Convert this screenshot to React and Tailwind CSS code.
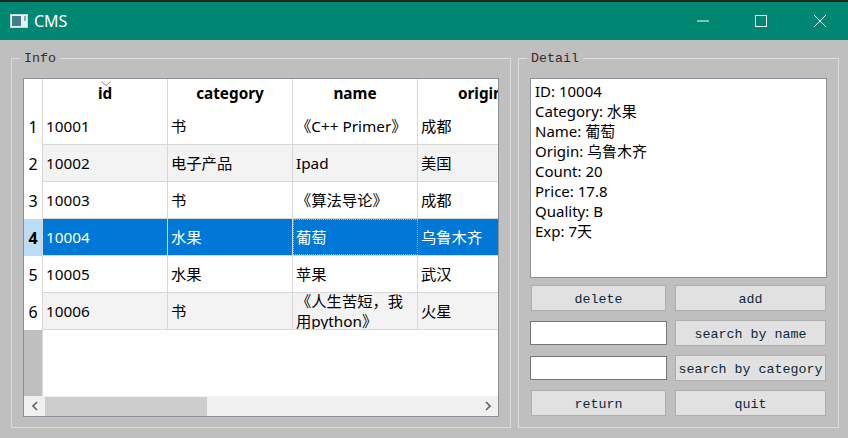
import React from 'react';

const sans = 'font-["Noto_Sans","Noto_Sans_CJK_SC",sans-serif]';
const mono = 'font-["Liberation_Mono","Noto_Sans_CJK_SC",monospace]';

const columns = [
    { label: 'id', key: 'id' },
    { label: 'category', key: 'category' },
    { label: 'name', key: 'name' },
];

const rows = [
    { id: '10001', category: '书', name: '《C++ Primer》', origin: '成都' },
    { id: '10002', category: '电子产品', name: 'Ipad', origin: '美国' },
    { id: '10003', category: '书', name: '《算法导论》', origin: '成都' },
    { id: '10004', category: '水果', name: '葡萄', origin: '乌鲁木齐' },
    { id: '10005', category: '水果', name: '苹果', origin: '武汉' },
    { id: '10006', category: '书', name: '《人生苦短，我用python》', origin: '火星' },
];

const detail = ['ID: 10004', 'Category: 水果', 'Name: 葡萄', 'Origin: 乌鲁木齐', 'Count: 20', 'Price: 17.8', 'Quality: B', 'Exp: 7天'];

const GroupBox = ({ title, className, children }) => (
    <div className={`relative border border-[#dcdcdc] ${className}`}>
        <span className={`absolute -top-[8px] left-[8px] bg-[#bfbfbf] px-[4px] text-[13.33px] leading-[16px] text-[#3a2a28] ${mono}`}>{title}</span>
        {children}
    </div>
);

const Button = ({ label, className = '' }) => (
    <button className={`h-[26px] border border-[#adadad] bg-[#e1e1e1] pt-[4px] text-[13.33px] leading-[16px] text-[#0a2a3a] ${mono} ${className}`}>{label}</button>
);

const Input = () => <input className="h-[24px] w-[137px] border border-[#767676] bg-white" />;

const Table = () => (
    <div className={`flex h-[339px] w-[476px] flex-col border border-[#8a8f98] bg-white text-[15.3px] text-black ${sans}`}>
        <div className="flex min-h-0 flex-1 overflow-hidden">
            {/* row header */}
            <div className="flex w-[18px] shrink-0 flex-col bg-[#bfbfbf]">
                <div className="h-[29px] shrink-0 bg-white" />
                {rows.map((row, i) => (
                    <div
                        key={row.id}
                        className={`flex h-[37px] shrink-0 items-center justify-center text-[16px] ${i === 3 ? 'bg-[#bcdcf4] font-bold' : 'bg-white'}`}
                    >
                        {i + 1}
                    </div>
                ))}
            </div>

            <div className="flex min-w-0 flex-1 flex-col border-l border-[#d8d8d8]">
                <div className="relative flex h-[29px] shrink-0 font-bold">
                    <svg className="absolute left-[58px] top-[2px]" width="10" height="5" viewBox="0 0 10 5" fill="none" stroke="#8a8a8a">
                        <path d="M0.5 0.5 L5 4.5 L9.5 0.5" />
                    </svg>
                    {columns.map((col) => (
                        <div key={col.key} className="flex w-[125px] shrink-0 justify-center border-r border-[#d8d8d8] leading-[28px]">{col.label}</div>
                    ))}
                    <div className="w-[125px] shrink-0 text-center leading-[28px]">origin</div>
                </div>

                {rows.map((row, i) => {
                    const selected = i === 3;
                    const rowClass = selected ? 'bg-[#0078d7] text-white' : i % 2 === 1 ? 'bg-[#f3f3f3]' : 'bg-white';
                    return (
                        <div key={row.id} className={`flex h-[37px] shrink-0 border-b border-[#d8d8d8] ${rowClass}`}>
                            {columns.map((col) => {
                                const current = selected && col.key === 'name';
                                return (
                                    <div
                                        key={col.key}
                                        className={`flex w-[125px] shrink-0 items-center overflow-hidden pr-[3px] leading-[20px] ${current ? 'border border-dotted border-[#f0a040] pl-[2px]' : 'border-r border-[#d8d8d8] pl-[3px]'}`}
                                    >
                                        <span>{row[col.key]}</span>
                                    </div>
                                );
                            })}
                            <div className="flex w-[125px] shrink-0 items-center pl-[3px]">{row.origin}</div>
                        </div>
                    );
                })}
            </div>
        </div>

        {/* horizontal scrollbar */}
        <div className="flex h-[20px] shrink-0 items-center bg-[#f0f0f0]">
            <div className="flex h-full w-[21px] items-center justify-center">
                <svg width="8" height="10" viewBox="0 0 8 10" fill="none" stroke="#606060" strokeWidth="1.6"><path d="M6 1 L2 5 L6 9" /></svg>
            </div>
            <div className="h-[19px] w-[162px] bg-[#cdcdcd]" />
            <div className="flex-1" />
            <div className="flex h-full w-[21px] items-center justify-center">
                <svg width="8" height="10" viewBox="0 0 8 10" fill="none" stroke="#606060" strokeWidth="1.6"><path d="M2 1 L6 5 L2 9" /></svg>
            </div>
        </div>
    </div>
);

export default function App() {
    return (
        <div className="flex h-[438px] w-[848px] flex-col overflow-hidden bg-[#bfbfbf]">
            <div className="h-[2px] bg-[#22261f]" />
            <div className="flex h-[38px] items-center bg-[#008774] text-white">
                <svg className="ml-[10px]" width="18" height="14" viewBox="0 0 18 14">
                    <rect x="0.5" y="0.5" width="17" height="13" fill="#e8f0f0" stroke="#c8d8d8" />
                    <rect x="2" y="2" width="9" height="10" fill="#3f7f8f" />
                    <rect x="14" y="2" width="2" height="5" fill="#9aa8a8" />
                </svg>
                <span className={`ml-[6px] text-[16px] ${sans}`}>CMS</span>
                <div className="flex-1" />
                <svg className="mr-[46px]" width="12" height="2" viewBox="0 0 12 2"><path d="M0 1 H12" stroke="white" /></svg>
                <svg className="mr-[47px]" width="12" height="12" viewBox="0 0 12 12" fill="none" stroke="white"><rect x="0.5" y="0.5" width="11" height="11" /></svg>
                <svg className="mr-[22px]" width="12" height="12" viewBox="0 0 12 12" fill="none" stroke="white"><path d="M0 0 L12 12 M12 0 L0 12" /></svg>
            </div>

            <div className="flex gap-[7px] pl-[11px] pt-[18px]">
                <GroupBox title="Info" className="h-[370px] w-[500px] pl-[11px] pt-[19px]">
                    <Table />
                </GroupBox>

                <GroupBox title="Detail" className="h-[370px] w-[321px] pl-[11px] pt-[19px]">
                    <div className={`h-[200px] w-[297px] border border-[#8a8f98] bg-white pl-[4px] pt-[2px] text-[15px] leading-[20px] text-black ${sans}`}>
                        {detail.map((line) => <div key={line}>{line}</div>)}
                    </div>
                    <div className="mt-[7px] grid w-[297px] grid-cols-[137px_151px] items-center gap-x-[8px] gap-y-[9px]">
                        <Button label="delete" className="ml-px w-[135px]" />
                        <Button label="add" />
                        <Input />
                        <Button label="search by name" />
                        <Input />
                        <Button label="search by category" />
                        <Button label="return" className="ml-px w-[135px]" />
                        <Button label="quit" />
                    </div>
                </GroupBox>
            </div>
        </div>
    );
}
